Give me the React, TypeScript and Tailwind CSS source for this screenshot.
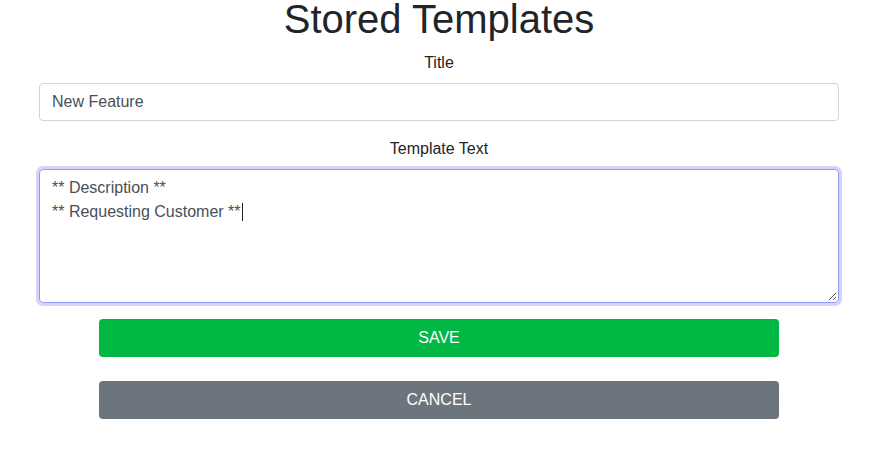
export default function App() {
  return (
    <div className="min-h-[449px] bg-white font-['Liberation_Sans',Arial,sans-serif]">
      <div className="w-[878px] flex flex-col items-center">
        <h1 className="text-[40px] leading-[38px] text-[#212529]">Stored Templates</h1>

        <div className="mt-[13px] w-[800px] flex flex-col items-center">
          <label className="text-base leading-6 text-[#212529]">Title</label>
          <div className="mt-[8px] h-[38px] w-full rounded-[4px] border border-[#ced4da] px-3 flex items-center text-base text-[#495057]">
            New Feature
          </div>

          <label className="mt-[16px] text-base leading-6 text-[#212529]">Template Text</label>
          <div className="relative mt-[8px] h-[134px] w-full rounded-[4px] border border-[#8f9cf7] shadow-[0_0_0_3px_#d6d2fc] px-3 py-[6px] text-base leading-6 text-[#495057]">
            <div>** Description **</div>
            <div className="flex items-center">
              ** Requesting Customer **
              <span className="ml-[1px] inline-block h-[18px] w-px bg-[#222]" />
            </div>
            <svg className="absolute right-[1px] bottom-[1px]" width="10" height="10" viewBox="0 0 10 10">
              <path d="M9 2 L2 9 M9 6 L6 9" stroke="#555" strokeWidth="1" />
            </svg>
          </div>
        </div>

        <div className="mt-[16px] w-[680px] flex flex-col gap-[24px]">
          <button className="h-[38px] w-full rounded-[4px] bg-[#00b843] text-base text-white flex items-center justify-center">
            SAVE
          </button>
          <button className="h-[38px] w-full rounded-[4px] bg-[#6c757d] text-base text-white flex items-center justify-center">
            CANCEL
          </button>
        </div>
      </div>
    </div>
  );
}
